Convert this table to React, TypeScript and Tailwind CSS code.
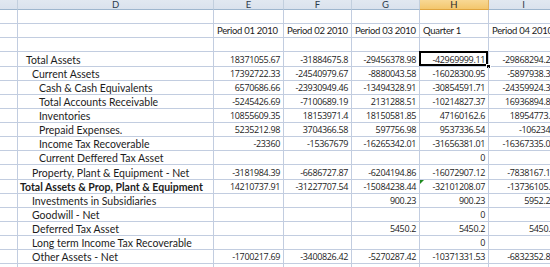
import React from 'react';

type Row = {
  label: string;
  indent: number;
  bold?: boolean;
  tall?: boolean;
  vals: string[];
};

const rows: Row[] = [
  { label: 'Total Assets', indent: 1, tall: true, vals: ['18371055.67', '-31884675.8', '-29456378.98', '-42969999.11', '-29868294.24'] },
  { label: 'Current Assets', indent: 2, vals: ['17392722.33', '-24540979.67', '-8880043.58', '-16028300.95', '-5897938.38'] },
  { label: 'Cash & Cash Equivalents', indent: 3, vals: ['6570686.66', '-23930949.46', '-13494328.91', '-30854591.71', '-24359924.35'] },
  { label: 'Total Accounts Receivable', indent: 3, vals: ['-5245426.69', '-7100689.19', '2131288.51', '-10214827.37', '16936894.85'] },
  { label: 'Inventories', indent: 3, vals: ['10855609.35', '18153971.4', '18150581.85', '47160162.6', '18954773.1'] },
  { label: 'Prepaid Expenses.', indent: 3, vals: ['5235212.98', '3704366.58', '597756.98', '9537336.54', '-1062347'] },
  { label: 'Income Tax Recoverable', indent: 3, vals: ['-23360', '-15367679', '-16265342.01', '-31656381.01', '-16367335.01'] },
  { label: 'Current Deffered Tax Asset', indent: 3, vals: ['', '', '', '0', ''] },
  { label: 'Property, Plant & Equipment - Net', indent: 2, tall: true, vals: ['-3181984.39', '-6686727.87', '-6204194.86', '-16072907.12', '-7838167.15'] },
  { label: 'Total Assets & Prop, Plant & Equipment', indent: 0, bold: true, vals: ['14210737.91', '-31227707.54', '-15084238.44', '-32101208.07', '-13736105.4'] },
  { label: 'Investments in Subsidiaries', indent: 2, vals: ['', '', '900.23', '900.23', '5952.23'] },
  { label: 'Goodwill - Net', indent: 2, vals: ['', '', '', '0', ''] },
  { label: 'Deferred Tax Asset', indent: 2, vals: ['', '', '5450.2', '5450.2', '5450.2'] },
  { label: 'Long term Income Tax Recoverable', indent: 2, vals: ['', '', '', '0', ''] },
  { label: 'Other Assets - Net', indent: 2, vals: ['-1700217.69', '-3400826.42', '-5270287.42', '-10371331.53', '-6832352.86'] },
];

const indentClass = ['pl-[2px]', 'pl-[8px]', 'pl-[14px]', 'pl-[21px]'];
const numWidths = ['w-[70px]', 'w-[68px]', 'w-[68px]', 'w-[69px]', 'w-[70px]'];

const cell = 'shrink-0 h-full border-r border-b border-[#c2cde0] overflow-hidden whitespace-nowrap';

function EmptyRow() {
  return (
    <div className="flex h-[14px]">
      <div className={`${cell} w-[18px]`} />
      <div className={`${cell} w-[196px]`} />
      {numWidths.map((w, i) => (
        <div key={i} className={`${cell} ${w}`} />
      ))}
    </div>
  );
}

export default function App() {
  const headers = ['', 'D', 'E', 'F', 'G', 'H', 'I'];
  const headWidths = ['w-[18px]', 'w-[196px]', ...numWidths];
  const periods = ['Period 01 2010', 'Period 02 2010', 'Period 03 2010', 'Quarter 1', 'Period 04 2010'];

  return (
    <div className="w-[550px] h-[267px] overflow-hidden bg-white text-[#1c1c1c] font-['Lato',sans-serif] text-[10.5px]">
      {/* column headers */}
      <div className="flex h-[10px]">
        {headers.map((h, i) => (
          <div
            key={i}
            className={`shrink-0 h-full border-r border-b flex items-center justify-center leading-[9px] text-[9.5px] overflow-hidden ${headWidths[i]} ${
              h === 'H'
                ? 'bg-gradient-to-b from-[#f8d894] to-[#f3c66c] border-r-[#e0b060] border-b-[#e0a540] text-[#2a2a2a]'
                : 'bg-gradient-to-b from-[#e1e8f1] to-[#dae2ed] border-r-[#c2cfde] border-b-[#9eb6ce] text-[#2d3b4c]'
            }`}
          >
            {h}
          </div>
        ))}
      </div>

      <EmptyRow />

      {/* period headers */}
      <div className="flex h-[14px]">
        <div className={`${cell} w-[18px]`} />
        <div className={`${cell} w-[196px]`} />
        {periods.map((p, i) => (
          <div key={i} className={`${cell} ${numWidths[i]} flex items-end leading-[12px] pl-[3px] text-[9.5px] tracking-[-0.3px]`}>
            {p}
          </div>
        ))}
      </div>

      <EmptyRow />

      {rows.map((r, ri) => (
        <div key={ri} className={`flex ${r.tall ? 'h-[15px]' : 'h-[14px]'}`}>
          <div className={`${cell} w-[18px]`} />
          <div className={`${cell} w-[196px] flex items-end leading-[12px] ${indentClass[r.indent]} ${r.bold ? 'font-bold' : ''}`}>
            {r.label}
          </div>
          {r.vals.map((v, i) => (
            <div
              key={i}
              className={`${cell} ${numWidths[i]} flex items-end leading-[12px] justify-end pr-[3px] font-['Open_Sans',sans-serif] text-[9px] tracking-[-0.35px] ${i === 3 ? 'relative overflow-visible' : ''}`}
            >
              {v}
              {i === 3 && ri === 0 && (
                <>
                  <div className="absolute -left-[1px] -top-[1px] right-0 bottom-0 border-2 border-black pointer-events-none" />
                  <div className="absolute -right-[3px] -bottom-[3px] w-[5px] h-[5px] bg-black border border-white" />
                </>
              )}
              {i === 3 && r.bold && (
                <div className="absolute left-0 top-0 w-[4px] h-[4px] bg-[#1e8a1e] [clip-path:polygon(0_0,100%_0,0_100%)]" />
              )}
            </div>
          ))}
        </div>
      ))}

      <EmptyRow />
    </div>
  );
}
